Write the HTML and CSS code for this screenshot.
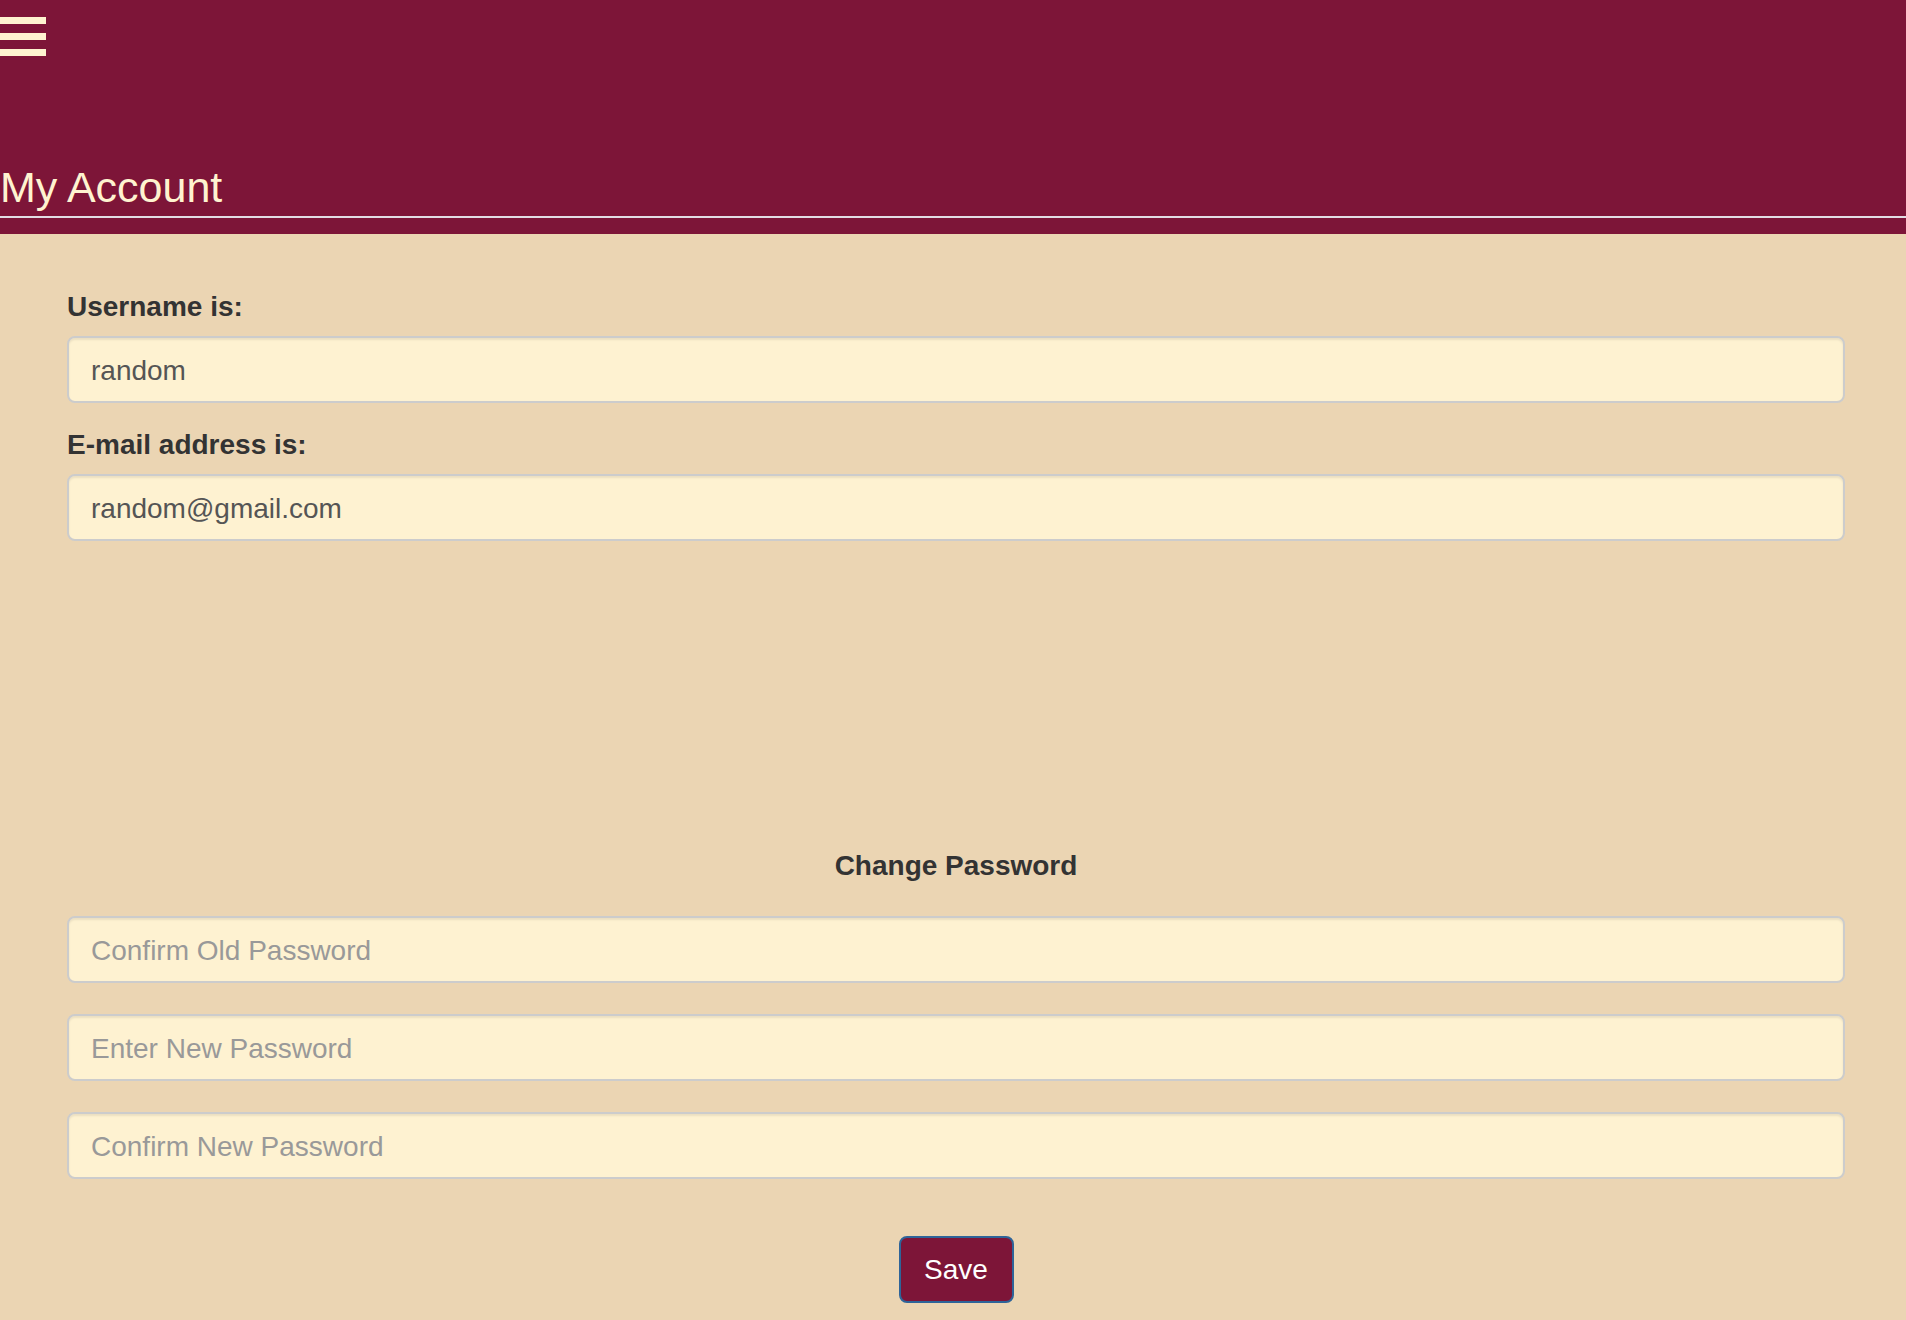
FILE: index.html
```html
<!DOCTYPE html>
<html lang="en">
<head>
<meta charset="utf-8">
<title>My Account</title>
<link rel="stylesheet" href="styles.css">
</head>
<body>
<header class="top">
  <div class="menu" aria-label="Menu">
    <span class="bar"></span>
    <span class="bar"></span>
    <span class="bar"></span>
  </div>
  <h1 class="title">My Account</h1>
  <div class="rule"></div>
</header>
<main class="content">
  <div class="group">
    <label class="label" for="u">Username is:</label>
    <input class="field" id="u" type="text" value="random">
  </div>
  <div class="group">
    <label class="label" for="e">E-mail address is:</label>
    <input class="field" id="e" type="text" value="random@gmail.com">
  </div>
  <section class="password">
    <h2 class="pw-title">Change Password</h2>
    <input class="field pw" type="password" placeholder="Confirm Old Password">
    <input class="field pw" type="password" placeholder="Enter New Password">
    <input class="field pw" type="password" placeholder="Confirm New Password">
    <div class="actions">
      <button class="save" type="button">Save</button>
    </div>
  </section>
</main>
</body>
</html>
```
FILE: styles.css
```css
html, body {
  margin: 0;
  padding: 0;
}
body {
  background: #ebd5b3;
  font-family: "Liberation Sans", Arial, Helvetica, sans-serif;
  color: #333333;
  min-height: 1320px;
}
.top {
  background: #7d1538;
  padding-top: 17px;
  padding-bottom: 16px;
  display: flex;
  flex-direction: column;
}
.menu {
  display: flex;
  flex-direction: column;
  gap: 9px;
  width: 46px;
}
.bar {
  display: block;
  height: 7px;
  background: #fff3d0;
}
.title {
  margin: 108px 0 0 0;
  font-size: 43px;
  line-height: 47px;
  font-weight: 400;
  color: #fff3d0;
}
.rule {
  margin-top: 5px;
  height: 2px;
  background: #e2dde4;
}
.content {
  padding: 51px 61px 0 67px;
  display: flex;
  flex-direction: column;
}
.group {
  display: flex;
  flex-direction: column;
  margin-bottom: 20px;
}
.label {
  font-size: 28px;
  line-height: 40px;
  font-weight: 700;
  color: #333333;
  padding-top: 2px;
  margin-bottom: 9px;
}
.field {
  box-sizing: border-box;
  width: 100%;
  height: 67px;
  border: 2px solid #cccccc;
  border-radius: 8px;
  background: #fef2d1;
  padding: 2px 22px 0 22px;
  font-family: "Liberation Sans", Arial, Helvetica, sans-serif;
  font-size: 28px;
  color: #555555;
  box-shadow: inset 0 2px 2px rgba(0, 0, 0, 0.075);
  outline: none;
  margin: 0;
}
.field::placeholder {
  color: #999999;
  opacity: 1;
}
.password {
  margin-top: 284px;
  display: flex;
  flex-direction: column;
  gap: 31px;
}
.pw-title {
  margin: 0;
  padding-top: 1px;
  margin-bottom: -1px;
  text-align: center;
  font-size: 28px;
  line-height: 40px;
  font-weight: 700;
  color: #333333;
}
.actions {
  display: flex;
  justify-content: center;
  margin-top: 26px;
}
.save {
  box-sizing: border-box;
  height: 67px;
  width: 115px;
  background: #7d1538;
  border: 2px solid #2e6499;
  border-radius: 8px;
  color: #ffffff;
  font-family: "Liberation Sans", Arial, Helvetica, sans-serif;
  font-size: 28px;
  padding: 0;
  cursor: pointer;
}
```
